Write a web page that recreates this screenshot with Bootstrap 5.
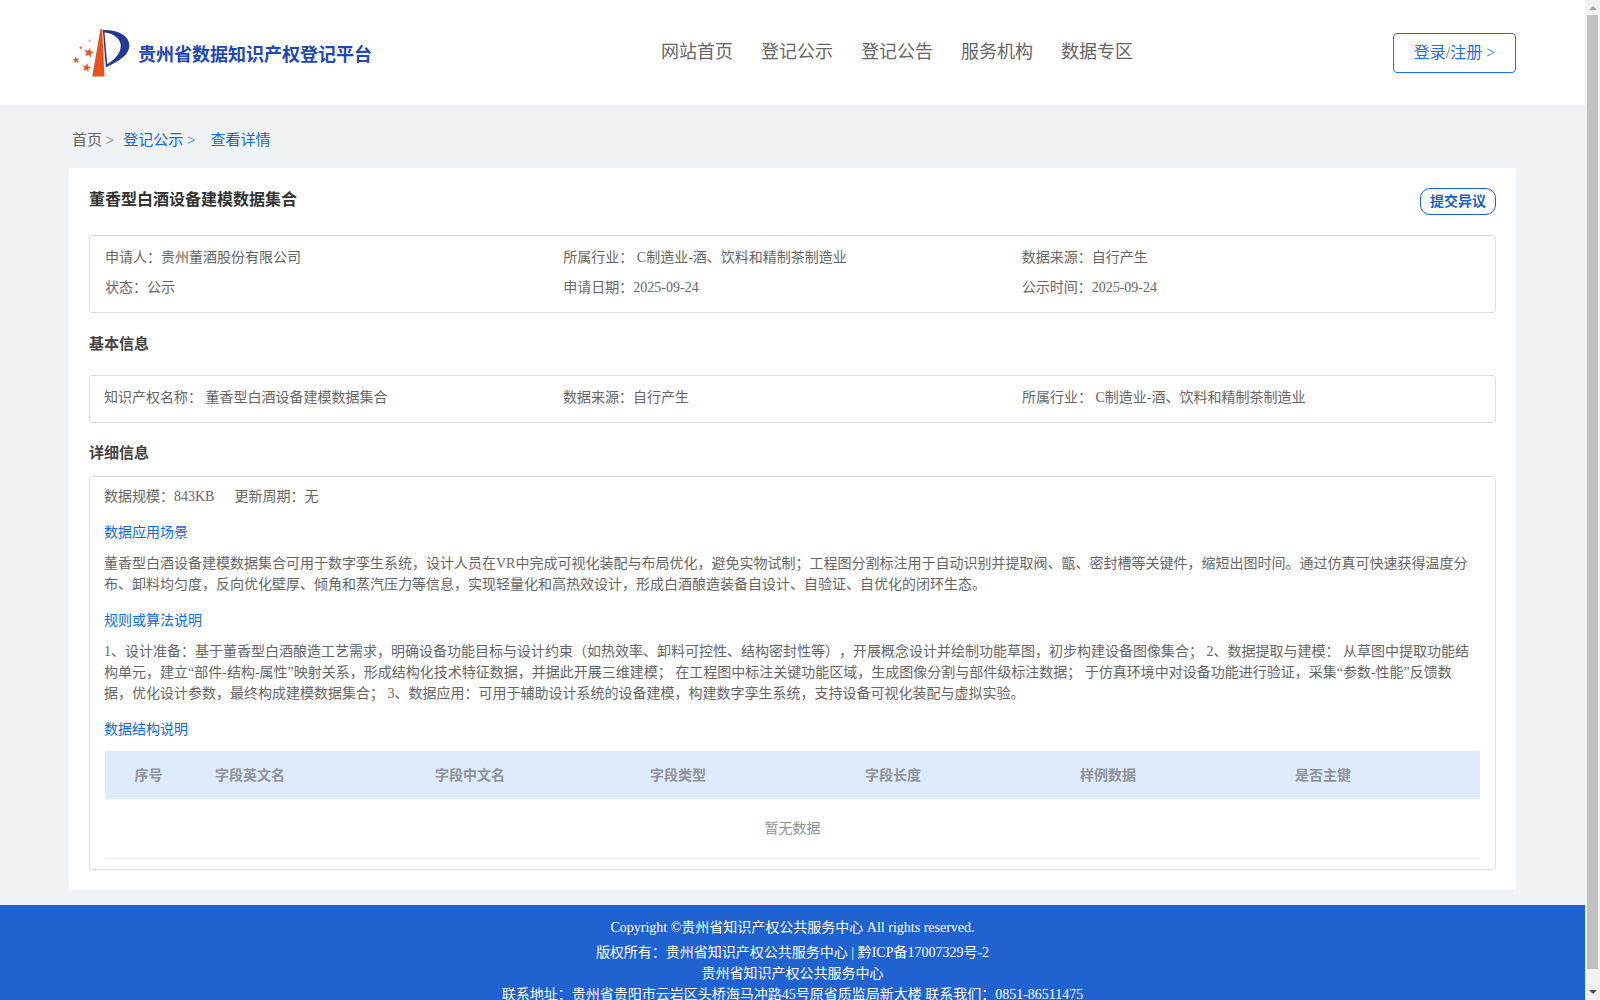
<!DOCTYPE html>
<html lang="zh-CN">
<head>
<meta charset="utf-8">
<title>贵州省数据知识产权登记平台</title>
<link rel="stylesheet" href="https://cdn.jsdelivr.net/npm/bootstrap@5.3.0/dist/css/bootstrap.min.css">
<style>
html,body{height:1000px;overflow:hidden}
body{background:#eff3f6;font-family:"Liberation Serif","Noto Sans CJK SC",serif;font-size:14px;color:#666;line-height:1.5;text-spacing-trim:space-all}
.shell{height:1000px}
.pagecol{width:1585px;overflow:hidden}
.fake-scroll{width:15px;background:#f1f1f1}
.fs-thumb{width:11px;margin-left:2px;height:954px;background:#c1c1c1}
.fs-up{width:0;height:0;border-left:4px solid transparent;border-right:4px solid transparent;border-bottom:4px solid #a3a3a3;margin:6px auto 5px}
.fs-down{width:0;height:0;border-left:4px solid transparent;border-right:4px solid transparent;border-top:4px solid #505050;margin:auto auto 6px}
.topbar{height:105px;background:#fff;padding:0 69px 0 70px}
.logo-name{font-size:18px;font-weight:700;color:#1f48b5;margin-left:5px;margin-top:5px}
.mainnav{gap:28px;margin-left:289px;margin-top:-1px}
.mainnav a{font-size:18px;color:#666;text-decoration:none}
.login-btn{width:123px;height:40px;border:1px solid #1d6fe8;border-radius:4px;color:#1d6fe8;font-size:16px;text-decoration:none;margin-left:auto;margin-top:1px}
.crumbs{height:63px;padding-left:72px;font-size:15px;color:#666;gap:9px;padding-top:8px}
.crumbs a{color:#1268dd;text-decoration:none}
.crumb-last{margin-left:6px}
.sheet{background:#fff;margin:0 69px;padding:0 20px 20px 20px}
.sheet-head{height:67px}
.sheet-title{font-size:16px;font-weight:700;color:#333;margin:0;padding-top:22px}
.dissent{height:27px;width:76px;border:1px solid #1f5fca;border-radius:10px;color:#1f5fca;font-size:14px;font-weight:700;margin-top:20px;text-decoration:none}
.infobox{border:1px solid #dedede;border-radius:3px}
.infobox .row{--bs-gutter-x:0}
.box-a{padding:6px 15px 10px 15px}
.box-a .rowline{height:30px}
.box-b{padding:0 14px 3px;height:48px}
.sec-head{font-size:15px;font-weight:700;color:#444;height:62px}
.sec-tight{height:53px;padding-top:8px}
.box-c{padding:9px 15px 10px 14px}
.scale-line{line-height:21px}
.cycle-part{margin-left:20px}
.sub-title{color:#1268dd;font-size:14px;margin:15px 0 10px;line-height:21px}
.sub-last{margin-bottom:11px}
.para{font-size:14px;line-height:21px;color:#666;margin:0}
.fieldtable{width:calc(100% - 1px);margin:0 0 0 1px;table-layout:fixed}
.fieldtable th{background:#deebfc;height:48px;color:#909399;font-weight:700;font-size:14px;border:0;padding:0 0 0 23px;vertical-align:middle}
.fieldtable th.c1{width:87px;padding:0;text-align:center}
.fieldtable th.c2{width:220px}
.fieldtable th.c3{width:215px}
.fieldtable td{height:59px;text-align:center;vertical-align:middle;color:#909399;font-size:14px;border-bottom:1px solid #ebeef5;padding:0}
.foot{background:#2062d0;height:95px;margin-top:15px;color:#fff;font-size:14px;line-height:21px;text-align:center;padding-top:12px}
.foot-first{margin-bottom:4px}
</style>
</head>
<body>
<div class="d-flex shell">
<div class="pagecol">
<header class="topbar d-flex align-items-center">
  <svg width="63" height="55" viewBox="30 30 190 165" aria-hidden="true">
    <defs><path id="st" d="M0-1 .235-.324.951-.309.38.124.588.809 0 .4-.588.809-.38.124-.951-.309-.235-.324Z"/></defs>
    <path d="M122 42h5l7 143H97z" fill="#e8521c"/>
    <path d="M129 45C172 44 209 60 209 92c0 28-34 48-67 63l-1-6c22-14 42-33 42-57 0-20-19-37-49-40l9 104h-5z" fill="#24399a"/>
    <use href="#st" transform="translate(87 113) rotate(12) scale(16)" fill="#e8521c"/>
    <use href="#st" transform="translate(48 135) rotate(-8) scale(11)" fill="#e8521c"/>
    <use href="#st" transform="translate(80 158) rotate(10) scale(14)" fill="#e8521c"/>
    <circle cx="63" cy="98" r="4.500" fill="#ee8a5e"/><circle cx="89" cy="77" r="3.500" fill="#f0a585"/>
  </svg>
  <span class="logo-name">贵州省数据知识产权登记平台</span>
  <nav class="mainnav d-flex">
    <a href="#">网站首页</a><a href="#">登记公示</a><a href="#">登记公告</a><a href="#">服务机构</a><a href="#">数据专区</a>
  </nav>
  <a href="#" class="login-btn d-flex align-items-center justify-content-center">登录/注册 &gt;</a>
</header>
<div class="crumbs d-flex align-items-center">
  <span>首页 &gt;</span><a href="#">登记公示 &gt;</a><a href="#" class="crumb-last">查看详情</a>
</div>
<main class="sheet">
  <div class="sheet-head d-flex justify-content-between align-items-start">
    <h1 class="sheet-title">董香型白酒设备建模数据集合</h1>
    <a href="#" class="dissent d-flex align-items-center justify-content-center">提交异议</a>
  </div>
  <div class="infobox box-a">
    <div class="row rowline align-items-center"><div class="col-4">申请人：贵州董酒股份有限公司</div><div class="col-4">所属行业： C制造业-酒、饮料和精制茶制造业</div><div class="col-4">数据来源：自行产生</div></div>
    <div class="row rowline align-items-center"><div class="col-4">状态：公示</div><div class="col-4">申请日期：2025-09-24</div><div class="col-4">公示时间：2025-09-24</div></div>
  </div>
  <div class="sec-head d-flex align-items-center">基本信息</div>
  <div class="infobox box-b d-flex align-items-center">
    <div class="row w-100"><div class="col-4">知识产权名称： 董香型白酒设备建模数据集合</div><div class="col-4">数据来源：自行产生</div><div class="col-4">所属行业： C制造业-酒、饮料和精制茶制造业</div></div>
  </div>
  <div class="sec-head sec-tight d-flex align-items-center">详细信息</div>
  <div class="infobox box-c">
    <div class="scale-line">数据规模：843KB<span class="cycle-part">更新周期：无</span></div>
    <div class="sub-title">数据应用场景</div>
    <p class="para">董香型白酒设备建模数据集合可用于数字孪生系统，设计人员在VR中完成可视化装配与布局优化，避免实物试制；工程图分割标注用于自动识别并提取阀、甑、密封槽等关键件，缩短出图时间。通过仿真可快速获得温度分布、卸料均匀度，反向优化壁厚、倾角和蒸汽压力等信息，实现轻量化和高热效设计，形成白酒酿造装备自设计、自验证、自优化的闭环生态。</p>
    <div class="sub-title">规则或算法说明</div>
    <p class="para">1、设计准备：基于董香型白酒酿造工艺需求，明确设备功能目标与设计约束（如热效率、卸料可控性、结构密封性等），开展概念设计并绘制功能草图，初步构建设备图像集合； 2、数据提取与建模： 从草图中提取功能结构单元，建立“部件-结构-属性”映射关系，形成结构化技术特征数据，并据此开展三维建模； 在工程图中标注关键功能区域，生成图像分割与部件级标注数据； 于仿真环境中对设备功能进行验证，采集“参数-性能”反馈数<br>据，优化设计参数，最终构成建模数据集合； 3、数据应用：可用于辅助设计系统的设备建模，构建数字孪生系统，支持设备可视化装配与虚拟实验。</p>
    <div class="sub-title sub-last">数据结构说明</div>
    <table class="table fieldtable">
      <thead><tr><th class="c1">序号</th><th class="c2">字段英文名</th><th class="c3">字段中文名</th><th class="c3">字段类型</th><th class="c3">字段长度</th><th class="c3">样例数据</th><th>是否主键</th></tr></thead>
      <tbody><tr><td colspan="7">暂无数据</td></tr></tbody>
    </table>
  </div>
</main>
<footer class="foot">
  <div class="foot-first">Copyright ©贵州省知识产权公共服务中心 All rights reserved.</div>
  <div>版权所有：贵州省知识产权公共服务中心 | 黔ICP备17007329号-2</div>
  <div>贵州省知识产权公共服务中心</div>
  <div>联系地址：贵州省贵阳市云岩区头桥海马冲路45号原省质监局新大楼 联系我们：0851-86511475</div>
</footer>
</div>
<div class="fake-scroll d-flex flex-column" aria-hidden="true"><div class="fs-up"></div><div class="fs-thumb"></div><div class="fs-down"></div></div>
</div>
<script src="https://cdn.jsdelivr.net/npm/bootstrap@5.3.0/dist/js/bootstrap.bundle.min.js"></script>
</body>
</html>
